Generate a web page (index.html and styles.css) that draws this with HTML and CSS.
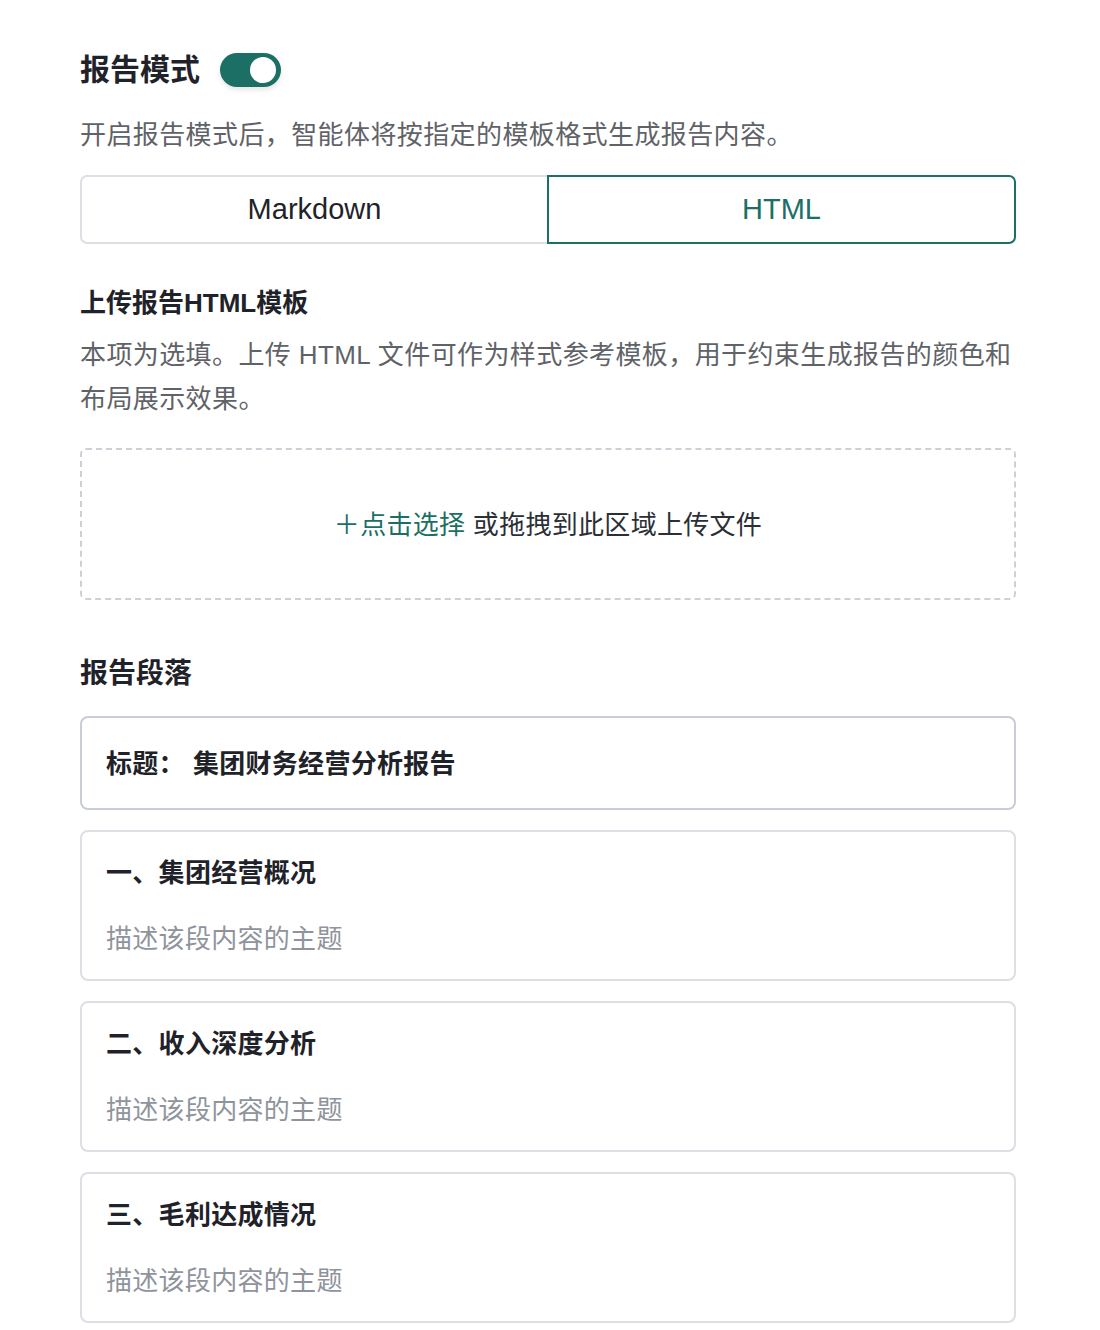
FILE: index.html
```html
<!DOCTYPE html>
<html lang="zh-CN">
<head>
<meta charset="utf-8">
<title>报告模式</title>
<link rel="stylesheet" href="styles.css">
</head>
<body>
<div class="page">
  <div class="title-row">
    <h1 class="title">报告模式</h1>
    <span class="toggle"><span class="knob"></span></span>
  </div>
  <p class="desc intro">开启报告模式后，智能体将按指定的模板格式生成报告内容。</p>

  <div class="segmented">
    <div class="seg seg-left">Markdown</div>
    <div class="seg seg-right active">HTML</div>
  </div>

  <h2 class="sub">上传报告HTML模板</h2>
  <p class="desc multi">本项为选填。上传 HTML 文件可作为样式参考模板，用于约束生成报告的颜色和布局展示效果。</p>

  <div class="upload">
    <span class="upload-link">＋点击选择</span><span class="upload-text">&nbsp;或拖拽到此区域上传文件</span>
  </div>

  <h2 class="section-title">报告段落</h2>

  <div class="title-card">
    <span class="tc-label">标题：</span><span class="tc-value">集团财务经营分析报告</span>
  </div>

  <div class="cards">
    <div class="card">
      <div class="card-title">一、集团经营概况</div>
      <div class="card-desc">描述该段内容的主题</div>
    </div>
    <div class="card">
      <div class="card-title">二、收入深度分析</div>
      <div class="card-desc">描述该段内容的主题</div>
    </div>
    <div class="card">
      <div class="card-title">三、毛利达成情况</div>
      <div class="card-desc">描述该段内容的主题</div>
    </div>
  </div>
</div>
</body>
</html>
```
FILE: styles.css
```css
* { box-sizing: border-box; }
html, body { margin: 0; padding: 0; background: #ffffff; }
body {
  font-family: "Liberation Sans", "Noto Sans CJK SC", sans-serif;
  color: #1f2329;
}
.page {
  width: 1100px;
  padding: 50px 84px 0 80px;
}
.title-row {
  display: flex;
  align-items: center;
  height: 40px;
}
.title {
  margin: 0;
  font-size: 30px;
  font-weight: 700;
  line-height: 40px;
  color: #1f2329;
}
.toggle {
  position: relative;
  display: inline-block;
  width: 61px;
  height: 34px;
  margin-left: 20px;
  border-radius: 17px;
  background: #1b6f65;
  box-shadow: 0 3px 5px rgba(0, 0, 0, 0.10);
}
.knob {
  position: absolute;
  top: 4px;
  right: 5px;
  width: 26px;
  height: 26px;
  border-radius: 50%;
  background: #ffffff;
}
.desc {
  margin: 0;
  font-size: 26px;
  letter-spacing: 0.4px;
  color: #5f6368;
}
.intro {
  margin-top: 25px;
  line-height: 40px;
}
.segmented {
  display: flex;
  margin-top: 20px;
  height: 69px;
}
.seg {
  flex: 1 1 0;
  display: flex;
  align-items: center;
  justify-content: center;
  font-size: 29px;
  color: #1f2329;
}
.seg-left {
  border: 2px solid #dcdfe4;
  border-right: none;
  border-radius: 7px 0 0 7px;
}
.seg-right {
  border: 2px solid #1b6f65;
  border-radius: 0 7px 7px 0;
  color: #1b6f65;
}
.sub {
  margin: 39px 0 0;
  font-size: 26px;
  font-weight: 700;
  line-height: 40px;
  color: #1f2329;
}
.multi {
  margin-top: 10px;
  line-height: 44px;
}
.upload {
  margin-top: 27px;
  height: 152px;
  border: 2px dashed #cdd1d7;
  border-radius: 6px;
  display: flex;
  align-items: center;
  justify-content: center;
  font-size: 26px;
  letter-spacing: 0.3px;
  padding-bottom: 3px;
}
.upload-link { color: #1b6f65; }
.upload-text { color: #2b2f36; }
.section-title {
  margin: 54px 0 0;
  font-size: 28px;
  font-weight: 700;
  line-height: 40px;
  color: #1f2329;
}
.title-card {
  margin-top: 22px;
  height: 94px;
  border: 2px solid #c9ced6;
  border-radius: 8px;
  padding-left: 24px;
  padding-bottom: 3px;
  display: flex;
  align-items: center;
  font-size: 26px;
  font-weight: 700;
  letter-spacing: 0.3px;
  color: #1f2329;
}
.tc-label { margin-right: 8px; }
.cards {
  display: flex;
  flex-direction: column;
  gap: 20px;
  margin-top: 20px;
}
.card {
  height: 151px;
  border: 2px solid #dcdfe4;
  border-radius: 8px;
  padding: 21px 24px 0;
}
.card-title {
  font-size: 26px;
  font-weight: 700;
  line-height: 40px;
  letter-spacing: 0.3px;
  color: #1f2329;
}
.card-desc {
  margin-top: 26px;
  font-size: 26px;
  line-height: 40px;
  letter-spacing: 0.3px;
  color: #8f949c;
}
```
